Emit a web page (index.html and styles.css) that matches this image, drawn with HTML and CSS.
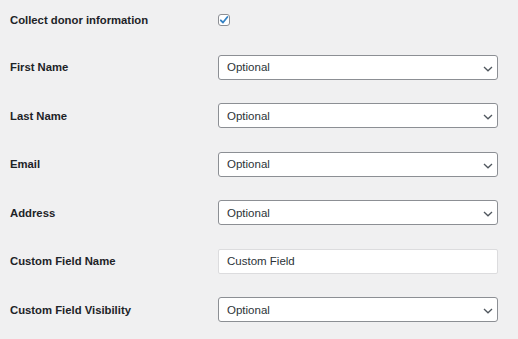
FILE: index.html
```html
<!DOCTYPE html>
<html>
<head>
<meta charset="utf-8">
<link rel="stylesheet" href="styles.css">
</head>
<body>
<div class="form">
  <div class="row row-first">
    <div class="label">Collect donor information</div>
    <div class="field"><span class="checkbox"><svg width="10" height="10" viewBox="0 0 10 10"><path d="M1.8 5.3 L4 7.5 L8.4 2" fill="none" stroke="#3582c4" stroke-width="1.8" stroke-linecap="round" stroke-linejoin="round"/></svg></span></div>
  </div>
  <div class="row">
    <div class="label">First Name</div>
    <div class="field"><div class="select">Optional<svg class="chev" width="10" height="6" viewBox="0 0 10 6"><path d="M1 1 L5 4.8 L9 1" fill="none" stroke="#50575e" stroke-width="1.3"/></svg></div></div>
  </div>
  <div class="row">
    <div class="label">Last Name</div>
    <div class="field"><div class="select">Optional<svg class="chev" width="10" height="6" viewBox="0 0 10 6"><path d="M1 1 L5 4.8 L9 1" fill="none" stroke="#50575e" stroke-width="1.3"/></svg></div></div>
  </div>
  <div class="row">
    <div class="label">Email</div>
    <div class="field"><div class="select">Optional<svg class="chev" width="10" height="6" viewBox="0 0 10 6"><path d="M1 1 L5 4.8 L9 1" fill="none" stroke="#50575e" stroke-width="1.3"/></svg></div></div>
  </div>
  <div class="row">
    <div class="label">Address</div>
    <div class="field"><div class="select">Optional<svg class="chev" width="10" height="6" viewBox="0 0 10 6"><path d="M1 1 L5 4.8 L9 1" fill="none" stroke="#50575e" stroke-width="1.3"/></svg></div></div>
  </div>
  <div class="row">
    <div class="label">Custom Field Name</div>
    <div class="field"><div class="input">Custom Field</div></div>
  </div>
  <div class="row">
    <div class="label">Custom Field Visibility</div>
    <div class="field"><div class="select">Optional<svg class="chev" width="10" height="6" viewBox="0 0 10 6"><path d="M1 1 L5 4.8 L9 1" fill="none" stroke="#50575e" stroke-width="1.3"/></svg></div></div>
  </div>
</div>
</body>
</html>
```
FILE: styles.css
```css
html, body {
  margin: 0;
  padding: 0;
  background: #f0f0f1;
}
body {
  font-family: "Liberation Sans", Arial, sans-serif;
  color: #1d2327;
  width: 518px;
  height: 339px;
  overflow: hidden;
}
.form {
  display: flex;
  flex-direction: column;
  padding-left: 10px;
}
.row {
  display: flex;
  align-items: center;
  height: 48.5px;
}
.row-first {
  height: 43px;
  align-items: flex-start;
  padding-top: 14px;
  box-sizing: border-box;
}
.label {
  width: 208px;
  font-size: 11.3px;
  font-weight: bold;
  color: #1d2327;
}
.row-first .label {
  line-height: 12px;
}
.field {
  width: 280px;
}
.checkbox {
  display: flex;
  align-items: center;
  justify-content: center;
  width: 12px;
  height: 12px;
  box-sizing: border-box;
  border: 1px solid #8c8f94;
  border-radius: 3px;
  background: #fff;
}
.select {
  position: relative;
  height: 25px;
  box-sizing: border-box;
  border: 1px solid #8c8f94;
  border-radius: 3px;
  background: #fff;
  font-size: 11.5px;
  color: #2c3338;
  padding-left: 8px;
  display: flex;
  align-items: center;
}
.chev {
  position: absolute;
  right: 4px;
  top: 10px;
}
.input {
  height: 25px;
  box-sizing: border-box;
  border: 1px solid #dcdcde;
  border-radius: 2px;
  background: #fff;
  font-size: 11.5px;
  color: #2c3338;
  padding-left: 8px;
  display: flex;
  align-items: center;
}
```
